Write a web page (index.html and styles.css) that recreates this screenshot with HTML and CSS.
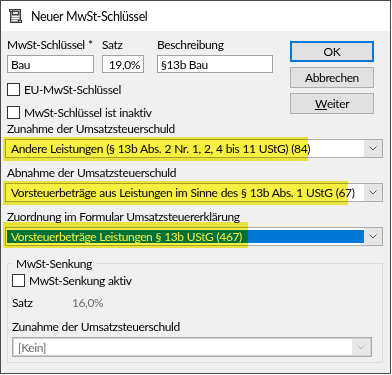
FILE: index.html
```html
<!DOCTYPE html>
<html lang="de">
<head>
    <meta charset="UTF-8">
    <meta name="viewport" content="width=device-width, initial-scale=1.0">
    <title>Neuer MwSt-Schlüssel</title>
    <link rel="stylesheet" href="styles.css">
</head>
<body>
    <div class="window">
        <div class="titlebar">
            <svg class="title-icon" width="16" height="16" viewBox="0 0 16 16">
                <rect x="3.5" y="1.5" width="10" height="13" fill="#9a9a9a" stroke="#3c3c3c"/>
                <rect x="2.5" y="1.5" width="3" height="2" fill="#c8c8c8" stroke="#3c3c3c"/>
                <rect x="11.5" y="12.5" width="3" height="2" fill="#c8c8c8" stroke="#3c3c3c"/>
                <rect x="5.5" y="3.5" width="6" height="3" fill="#e6e6e6" stroke="#3c3c3c"/>
                <line x1="5" y1="8.5" x2="12" y2="8.5" stroke="#f0f0f0"/>
                <line x1="5" y1="10.5" x2="12" y2="10.5" stroke="#f0f0f0"/>
                <line x1="5" y1="12.5" x2="10" y2="12.5" stroke="#f0f0f0"/>
            </svg>
            <span class="title-text">Neuer MwSt-Schlüssel</span>
        </div>

        <div class="client">
            <div class="top">
                <div class="fields">
                    <div class="field-row">
                        <div class="field field-key">
                            <label class="label">MwSt-Schlüssel *</label>
                            <input class="edit" type="text" value="Bau">
                        </div>
                        <div class="field field-rate">
                            <label class="label">Satz</label>
                            <input class="edit edit-right" type="text" value="19,0%">
                        </div>
                        <div class="field field-desc">
                            <label class="label">Beschreibung</label>
                            <input class="edit" type="text" value="§13b Bau">
                        </div>
                    </div>
                    <div class="check-row check-first">
                        <span class="checkbox"></span>
                        <span>EU-MwSt-Schlüssel</span>
                    </div>
                    <div class="check-row">
                        <span class="checkbox"></span>
                        <span>MwSt-Schlüssel ist inaktiv</span>
                    </div>
                </div>
                <div class="buttons">
                    <div class="button button-default">OK</div>
                    <div class="button">Abbrechen</div>
                    <div class="button"><u>W</u>eiter</div>
                </div>
            </div>

            <div class="label combo-label">Zunahme der Umsatzsteuerschuld</div>
            <div class="combo">
                <div class="combo-text">Andere Leistungen (§ 13b Abs. 2 Nr. 1, 2, 4 bis 11 UStG) (84)</div>
                <div class="combo-button">
                    <svg width="8" height="5" viewBox="0 0 8 5"><path d="M0.5 0.5 L4 4 L7.5 0.5" fill="none" stroke="#5a5a5a"/></svg>
                </div>
                <div class="marker marker-a"></div>
            </div>

            <div class="label combo-label">Abnahme der Umsatzsteuerschuld</div>
            <div class="combo">
                <div class="combo-text">Vorsteuerbeträge aus Leistungen im Sinne des § 13b Abs. 1 UStG (67)</div>
                <div class="combo-button">
                    <svg width="8" height="5" viewBox="0 0 8 5"><path d="M0.5 0.5 L4 4 L7.5 0.5" fill="none" stroke="#5a5a5a"/></svg>
                </div>
                <div class="marker marker-b"></div>
            </div>

            <div class="label combo-label">Zuordnung im Formular Umsatzsteuererklärung</div>
            <div class="combo">
                <div class="combo-text combo-selected">Vorsteuerbeträge Leistungen § 13b UStG (467)</div>
                <div class="combo-button">
                    <svg width="8" height="5" viewBox="0 0 8 5"><path d="M0.5 0.5 L4 4 L7.5 0.5" fill="none" stroke="#5a5a5a"/></svg>
                </div>
                <div class="marker marker-c"></div>
            </div>

            <fieldset class="group">
                <legend class="group-title">MwSt-Senkung</legend>
                <div class="check-row group-check">
                    <span class="checkbox"></span>
                    <span>MwSt-Senkung aktiv</span>
                </div>
                <div class="rate-row">
                    <span class="rate-label">Satz</span>
                    <span class="rate-value">16,0%</span>
                </div>
                <div class="label group-label">Zunahme der Umsatzsteuerschuld</div>
                <div class="combo combo-disabled">
                    <div class="combo-text">[Kein]</div>
                    <div class="combo-button">
                        <svg width="8" height="5" viewBox="0 0 8 5"><path d="M0.5 0.5 L4 4 L7.5 0.5" fill="none" stroke="#b4b4b4"/></svg>
                    </div>
                </div>
            </fieldset>
        </div>
    </div>
</body>
</html>
```

FILE: styles.css
```css
body {
    margin: 0;
    background-color: #ffffff;
}
.window {
    width: 391px;
    height: 374px;
    box-sizing: border-box;
    border: 1px solid #4a4a4a;
    background-color: #f0f0f0;
    font-family: Lato, "Noto Sans", sans-serif;
    font-size: 12px;
    letter-spacing: -0.4px;
    word-spacing: 0.5px;
    color: #000000;
    overflow: hidden;
}
.titlebar {
    height: 30px;
    background-color: #ffffff;
    display: flex;
    align-items: center;
    padding-left: 6px;
    gap: 8px;
}
.title-icon {
    display: block;
}
.title-text {
    font-size: 12.5px;
}
.top {
    display: flex;
    padding: 6px 0 0 6px;
}
.fields {
    width: 266px;
}
.field-row {
    display: flex;
}
.field {
    display: flex;
    flex-direction: column;
}
.field-key {
    width: 87px;
    margin-right: 8px;
}
.field-rate {
    width: 42px;
    margin-right: 13px;
}
.field-desc {
    width: 116px;
}
.label {
    display: block;
    height: 15px;
    line-height: 15px;
    white-space: nowrap;
}
.edit {
    height: 18px;
    margin: 3px 0 0 0;
    box-sizing: border-box;
    border: 1px solid #a2a2a2;
    background-color: #ffffff;
    padding: 0 3px;
    font: inherit;
    letter-spacing: inherit;
    color: #000000;
    width: 100%;
    outline: none;
}
.edit-right {
    text-align: right;
}
.check-row {
    display: flex;
    align-items: center;
    gap: 4px;
    height: 17px;
    margin-top: 6px;
    white-space: nowrap;
}
.check-first {
    margin-top: 8px;
}
.checkbox {
    width: 13px;
    height: 13px;
    box-sizing: border-box;
    border: 1px solid #333333;
    background-color: #ffffff;
    flex-shrink: 0;
}
.buttons {
    width: 84px;
    margin: 4px 0 0 17px;
    display: flex;
    flex-direction: column;
    gap: 5px;
}
.button {
    height: 21px;
    box-sizing: border-box;
    border: 1px solid #adadad;
    background-color: #e1e1e1;
    display: flex;
    align-items: center;
    justify-content: center;
}
.button-default {
    border: 2px solid #0078d7;
}
.combo-label {
    margin-left: 6px;
}
.combo {
    position: relative;
    height: 19px;
    margin: 3px 7px 7px 4px;
    box-sizing: border-box;
    border: 1px solid #acacac;
    background-color: #ffffff;
    display: flex;
}
.combo-text {
    flex: 1;
    padding-left: 5px;
    line-height: 17px;
    white-space: nowrap;
    overflow: hidden;
}
.combo-selected {
    margin: 2px 0 2px 1px;
    padding-left: 4px;
    line-height: 13px;
    background-color: #0078d7;
    color: #ffffff;
}
.combo-button {
    width: 18px;
    background-color: #e5e5e5;
    display: flex;
    align-items: center;
    justify-content: center;
}
.combo-button svg {
    display: block;
}
.marker {
    position: absolute;
    left: -3px;
    background-color: #f8f040;
    mix-blend-mode: multiply;
}
.marker-a {
    top: -3px;
    width: 305px;
    height: 24px;
}
.marker-b {
    top: -3px;
    width: 345px;
    height: 24px;
}
.marker-c {
    top: -6px;
    width: 245px;
    height: 26px;
}
.group {
    margin: 10px 7px 0 6px;
    padding: 0 10px 5px 4px;
    border: 1px solid #dcdcdc;
    min-width: 0;
}
.group-title {
    padding: 0 4px;
    line-height: 15px;
}
.group-check {
    margin-top: 1px;
}
.rate-row {
    display: flex;
    height: 15px;
    line-height: 15px;
    margin-top: 6px;
}
.rate-label {
    width: 60px;
}
.rate-value {
    color: #6d6d6d;
}
.group-label {
    margin-top: 9px;
}
.combo-disabled {
    height: 20px;
    margin: 3px 0 0 0;
    border-color: #a9a9a9;
    box-shadow: inset 0 0 0 1px #ccd2da;
    color: #6d6d6d;
}
.combo-disabled .combo-text {
    line-height: 18px;
    padding-left: 4px;
    margin: 1px 0 1px 1px;
}
.combo-disabled .combo-button {
    background-color: #e8e8e8;
    margin: 1px 1px 1px 0;
}
```
